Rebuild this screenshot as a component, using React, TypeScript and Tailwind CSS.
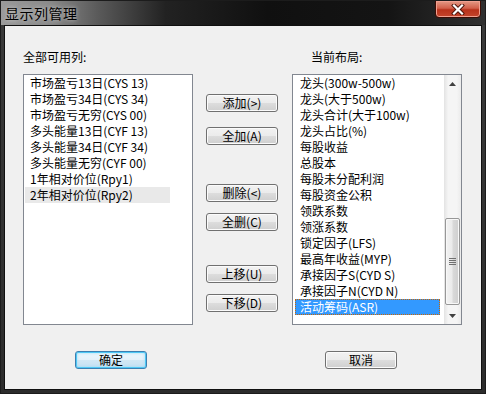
import React from 'react';

const leftItems = [
  '市场盈亏13日(CYS 13)',
  '市场盈亏34日(CYS 34)',
  '市场盈亏无穷(CYS 00)',
  '多头能量13日(CYF 13)',
  '多头能量34日(CYF 34)',
  '多头能量无穷(CYF 00)',
  '1年相对价位(Rpy1)',
  '2年相对价位(Rpy2)',
];

const rightItems = [
  '龙头(300w-500w)',
  '龙头(大于500w)',
  '龙头合计(大于100w)',
  '龙头占比(%)',
  '每股收益',
  '总股本',
  '每股未分配利润',
  '每股资金公积',
  '领跌系数',
  '领涨系数',
  '锁定因子(LFS)',
  '最高年收益(MYP)',
  '承接因子S(CYD S)',
  '承接因子N(CYD N)',
  '活动筹码(ASR)',
];

// Win7 style push button
const Btn: React.FC<{ label: string; className?: string; primary?: boolean }> = ({ label, className = '', primary }) => (
  <button
    className={`h-[18px] w-[72px] rounded-[3px] border text-[12px] leading-[16px] text-black ${
      primary
        ? 'border-[#3c7fb1] bg-[linear-gradient(to_bottom,#eef7fc_0%,#e3f1fa_50%,#d2e8f5_50%,#c4e0f2_100%)] shadow-[inset_0_0_0_1px_#4fc8f5,inset_0_0_3px_1px_#9fdcf7]'
        : 'border-[#707070] bg-[linear-gradient(to_bottom,#f2f2f2_0%,#ebebeb_50%,#dddddd_50%,#cfcfcf_100%)] shadow-[inset_0_0_0_1px_#fbfbfb]'
    } ${className}`}
  >
    {label}
  </button>
);

const Row: React.FC<{ text: string; state?: 'grey' | 'blue' }> = ({ text, state }) => (
  <div
    className={`h-[16px] w-[145px] pl-[5px] leading-[16px] whitespace-nowrap ${
      state === 'grey' ? 'bg-[#e9e9e9]' : ''
    } ${state === 'blue' ? 'bg-[#3399ff] text-white outline-1 outline-dotted outline-[#cc6600] -outline-offset-1' : ''}`}
  >
    {text}
  </div>
);

const App: React.FC = () => {
  return (
    <div className="w-[486px] h-[394px] flex flex-col border border-[#1c1c1c] bg-[linear-gradient(to_bottom,#3a3a3a,#2c2c2c)] font-['Noto_Sans_CJK_SC','Liberation_Sans',sans-serif] text-[12px] text-black select-none overflow-hidden">
      {/* Title bar */}
      <div className="h-[24px] flex items-start justify-between pl-[4px] pr-[4px] bg-[linear-gradient(to_right,#9a9a9a_0%,#8a8a8a_10%,#5a5a5a_20%,#222222_34%,#101010_55%,#141414_80%,#303030_100%)]">
        <span className="mt-[4px] text-[14px] leading-[16px] tracking-[0.5px] text-black [text-shadow:0_0_4px_rgba(230,230,230,0.8)]">
          显示列管理
        </span>
        <div className="w-[46px] h-[18px] -mt-[1px] rounded-b-[4px] border border-[#3c0c04] bg-[linear-gradient(to_bottom,#e49a86_0%,#d2604a_45%,#b8321b_55%,#c4452c_100%)] shadow-[inset_0_0_0_1px_#f0a090] flex items-center justify-center">
          <svg width="14" height="11" viewBox="0 0 14 11">
            <path d="M3 1.5 L11 9.5 M11 1.5 L3 9.5" stroke="#4a1208" strokeWidth="4" strokeLinecap="square" />
            <path d="M3 1.5 L11 9.5 M11 1.5 L3 9.5" stroke="#ffffff" strokeWidth="2.2" strokeLinecap="square" />
          </svg>
        </div>
      </div>

      {/* Client area */}
      <div className="flex-1 mx-[3px] mb-[3px] border border-[#101010] bg-[#f0f0f0] pl-[18px] pt-[23px]">
        <div className="flex h-[16px] leading-[16px]">
          <span className="w-[170px]">全部可用列:</span>
          <span className="ml-[118px]">当前布局:</span>
        </div>

        <div className="flex items-start mt-[9px]">
          {/* Left list */}
          <div className="w-[170px] h-[251px] border border-[#828790] bg-white pl-[1px] overflow-hidden">
            {leftItems.map((t, i) => (
              <Row key={t} text={t} state={i === leftItems.length - 1 ? 'grey' : undefined} />
            ))}
          </div>

          {/* Middle buttons */}
          <div className="ml-[13px] w-[72px] flex flex-col">
            <Btn label="添加(>)" className="mt-[20px]" />
            <Btn label="全加(A)" className="mt-[15px]" />
            <Btn label="删除(<)" className="mt-[39px]" />
            <Btn label="全删(C)" className="mt-[11px]" />
            <Btn label="上移(U)" className="mt-[34px]" />
            <Btn label="下移(D)" className="mt-[11px]" />
          </div>

          {/* Right list */}
          <div className="ml-[14px] w-[170px] h-[251px] border border-[#828790] bg-white flex overflow-hidden">
            <div className="flex-1 pl-[2px]">
              {rightItems.map((t, i) => (
                <Row key={t} text={t} state={i === rightItems.length - 1 ? 'blue' : undefined} />
              ))}
            </div>
            <div className="w-[17px] flex flex-col bg-[linear-gradient(to_right,#e3e3e3,#f5f5f5_25%,#f5f5f5_75%,#ebebeb)]">
              <div className="h-[17px] flex items-center justify-center">
                <svg width="7" height="4" viewBox="0 0 7 4">
                  <path d="M0 4 L3.5 0 L7 4 Z" fill="#404040" />
                </svg>
              </div>
              <div className="flex-1 flex flex-col">
                <div className="mt-[126px] mx-[1px] h-[87px] rounded-[2px] border border-[#979797] bg-[linear-gradient(to_right,#f2f2f2,#ebebeb_45%,#d9d9d9_55%,#cfcfcf)] shadow-[inset_0_0_0_1px_#f8f8f8] flex flex-col items-center justify-center gap-[1px]">
                  <div className="w-[7px] h-[1px] bg-[#707070]" />
                  <div className="w-[7px] h-[1px] bg-[#707070]" />
                  <div className="w-[7px] h-[1px] bg-[#707070]" />
                  <div className="w-[7px] h-[1px] bg-[#707070]" />
                </div>
              </div>
              <div className="h-[17px] flex items-center justify-center">
                <svg width="7" height="4" viewBox="0 0 7 4">
                  <path d="M0 0 L7 0 L3.5 4 Z" fill="#404040" />
                </svg>
              </div>
            </div>
          </div>
        </div>

        <div className="flex mt-[26px]">
          <Btn label="确定" primary className="ml-[52px]" />
          <Btn label="取消" className="ml-[178px]" />
        </div>
      </div>
    </div>
  );
};

export default App;
